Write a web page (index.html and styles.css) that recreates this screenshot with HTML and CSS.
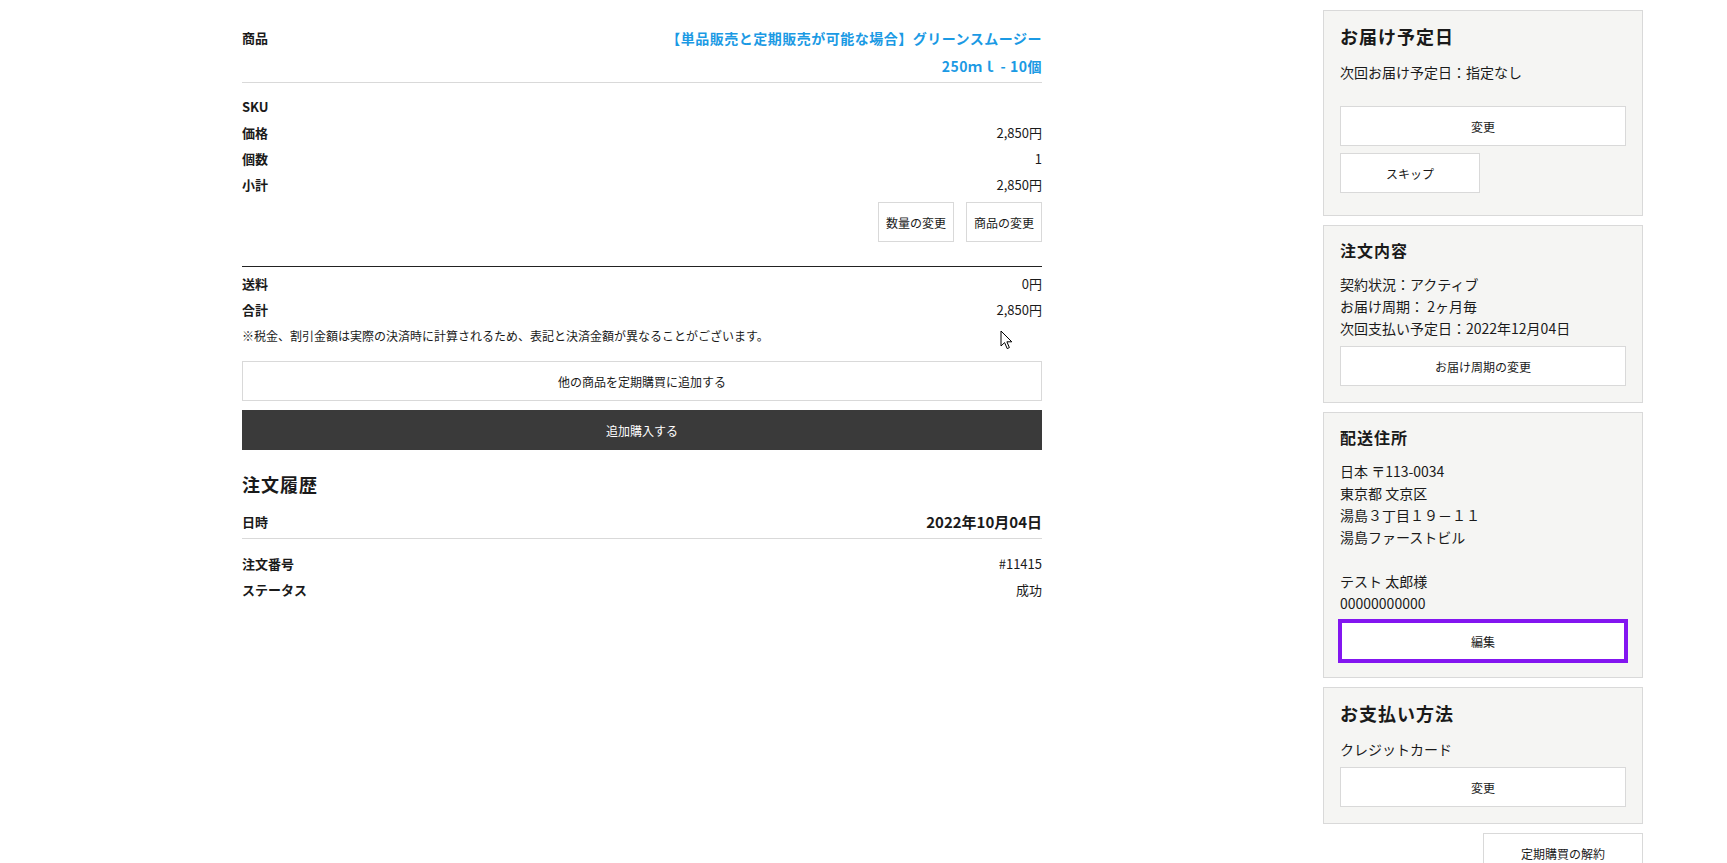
FILE: index.html
```html
<!DOCTYPE html>
<html lang="ja">
<head>
  <meta charset="UTF-8" />
  <meta name="viewport" content="width=device-width, initial-scale=1.0"/>
  <title>定期購買の詳細</title>
  <link rel="stylesheet" href="styles.css">
</head>
<body>
  <div class="page">

    <!-- Subscription line item, totals and order history -->
    <main class="subscription">
      <div class="product-row">
        <span class="label">商品</span>
        <a class="product-name" href="#">【単品販売と定期販売が可能な場合】グリーンスムージー 250ｍｌ - 10個</a>
      </div>

      <div class="item-details">
        <div class="row"><span class="label">SKU</span><span class="value"></span></div>
        <div class="row"><span class="label">価格</span><span class="value">2,850円</span></div>
        <div class="row"><span class="label">個数</span><span class="value">1</span></div>
        <div class="row"><span class="label">小計</span><span class="value">2,850円</span></div>
      </div>

      <div class="item-actions">
        <button class="btn btn-small" type="button">数量の変更</button>
        <button class="btn btn-small" type="button">商品の変更</button>
      </div>

      <div class="totals">
        <div class="row"><span class="label">送料</span><span class="value">0円</span></div>
        <div class="row"><span class="label">合計</span><span class="value">2,850円</span></div>
        <p class="note">※税金、割引金額は実際の決済時に計算されるため、表記と決済金額が異なることがございます。</p>
      </div>

      <button class="btn btn-wide" type="button">他の商品を定期購買に追加する</button>
      <button class="btn btn-wide btn-dark" type="button">追加購入する</button>

      <section class="history">
        <h2 class="history-title">注文履歴</h2>
        <div class="row history-head">
          <span class="label">日時</span>
          <span class="value date">2022年10月04日</span>
        </div>
        <div class="history-details">
          <div class="row"><span class="label">注文番号</span><span class="value">#11415</span></div>
          <div class="row"><span class="label">ステータス</span><span class="value">成功</span></div>
        </div>
      </section>
    </main>

    <!-- Sidebar cards -->
    <aside class="sidebar">
      <section class="card card-delivery">
        <h3 class="card-title is-large">お届け予定日</h3>
        <p class="card-text">次回お届け予定日：指定なし</p>
        <div class="card-actions is-spaced">
          <button class="btn" type="button">変更</button>
          <button class="btn btn-skip" type="button">スキップ</button>
        </div>
      </section>

      <section class="card">
        <h3 class="card-title">注文内容</h3>
        <p class="card-text">契約状況：アクティブ<br>お届け周期： 2ヶ月毎<br>次回支払い予定日：2022年12月04日</p>
        <div class="card-actions">
          <button class="btn" type="button">お届け周期の変更</button>
        </div>
      </section>

      <section class="card">
        <h3 class="card-title">配送住所</h3>
        <p class="card-text">日本 〒113-0034<br>東京都 文京区<br>湯島３丁目１９－１１<br>湯島ファーストビル<br><br>テスト 太郎様<br>00000000000</p>
        <div class="card-actions">
          <button class="btn is-focused" type="button">編集</button>
        </div>
      </section>

      <section class="card">
        <h3 class="card-title is-large">お支払い方法</h3>
        <p class="card-text">クレジットカード</p>
        <div class="card-actions">
          <button class="btn" type="button">変更</button>
        </div>
      </section>

      <button class="btn btn-cancel" type="button">定期購買の解約</button>
    </aside>
  </div>

  <!-- mouse pointer -->
  <svg class="pointer" width="13" height="20" viewBox="0 0 13 20" aria-hidden="true">
    <path d="M1 1 L1 16 L4.6 12.6 L7.2 18.6 L9.4 17.6 L6.9 11.8 L11.8 11.8 Z" fill="#fff" stroke="#000" stroke-width="1" stroke-linejoin="round"/>
  </svg>
</body>
</html>
```

FILE: styles.css
```css
/* Shared colours */
:root {
  --text: #1a1a1a;
  --link: #1b9ae4;
  --line: #d9d9d9;
  --card-bg: #f5f5f3;
  --dark: #3a3a3a;
  --focus: #8316f0;
}

* {
  box-sizing: border-box;
}

body {
  margin: 0;
  background: #fff;
  color: var(--text);
  font-family: "Noto Sans CJK JP", "Noto Sans", sans-serif;
}

/* Two column page */
.page {
  display: flex;
  align-items: flex-start;
  gap: 281px;
  padding: 10px 0 0 242px;
}

.subscription {
  width: 800px;
}

.sidebar {
  width: 320px;
  display: flex;
  flex-direction: column;
  gap: 9px;
}

/* Label / value rows */
.row {
  display: flex;
  justify-content: space-between;
  font-size: 13px;
  line-height: 26px;
}

.label {
  font-weight: 700;
}

.product-row {
  display: flex;
  justify-content: space-between;
  align-items: flex-start;
  padding: 14px 0 2px;
  border-bottom: 1px solid var(--line);
  font-size: 13px;
  line-height: 28px;
}

.product-name {
  max-width: 390px;
  color: var(--link);
  font-size: 14px;
  font-weight: 700;
  letter-spacing: 0.5px;
  text-align: right;
  text-decoration: none;
}

.item-details {
  padding-top: 11px;
}

.item-actions {
  display: flex;
  justify-content: flex-end;
  gap: 12px;
  margin-top: 4px;
  padding-bottom: 24px;
  border-bottom: 1px solid #222;
}

.totals {
  padding-top: 4px;
}

.note {
  margin: 0;
  font-size: 12px;
  line-height: 26px;
}

/* Buttons */
.btn {
  display: block;
  height: 40px;
  padding: 0;
  border: 1px solid var(--line);
  background: #fff;
  color: var(--text);
  font-family: inherit;
  font-size: 12px;
  cursor: pointer;
}

.btn-small {
  width: 76px;
}

.btn-wide {
  width: 100%;
  margin-top: 12px;
}

.btn-dark {
  margin-top: 9px;
  border: none;
  background: var(--dark);
  color: #fff;
}

/* Order history */
.history-title {
  margin: 21px 0 12px;
  font-size: 18px;
  line-height: 26px;
  letter-spacing: 1px;
}

.history-head {
  padding-bottom: 3px;
  border-bottom: 1px solid var(--line);
}

.date {
  font-size: 15px;
  font-weight: 700;
}

.history-details {
  padding-top: 12px;
}

/* Sidebar cards */
.card {
  padding: 12px 16px 16px;
  border: 1px solid var(--line);
  background: var(--card-bg);
}

.card-delivery {
  padding-bottom: 22px;
}

.card-title {
  margin: 0 0 11px;
  font-size: 16px;
  line-height: 1.5;
  letter-spacing: 1px;
}

.card-title.is-large {
  font-size: 18px;
}

.card-text {
  margin: 0;
  font-size: 14px;
  line-height: 22px;
}

.card-actions {
  display: flex;
  flex-direction: column;
  align-items: flex-start;
  gap: 7px;
  margin-top: 7px;
}

.card-actions.is-spaced {
  margin-top: 23px;
}

.card-actions .btn {
  width: 100%;
}

.card-actions .btn-skip {
  width: 140px;
}

.btn.is-focused {
  outline: 4px solid var(--focus);
  outline-offset: -2px;
}

.btn-cancel {
  align-self: flex-end;
  width: 160px;
}

/* Pointer over the page */
.pointer {
  position: absolute;
  left: 1000px;
  top: 330px;
}
```
